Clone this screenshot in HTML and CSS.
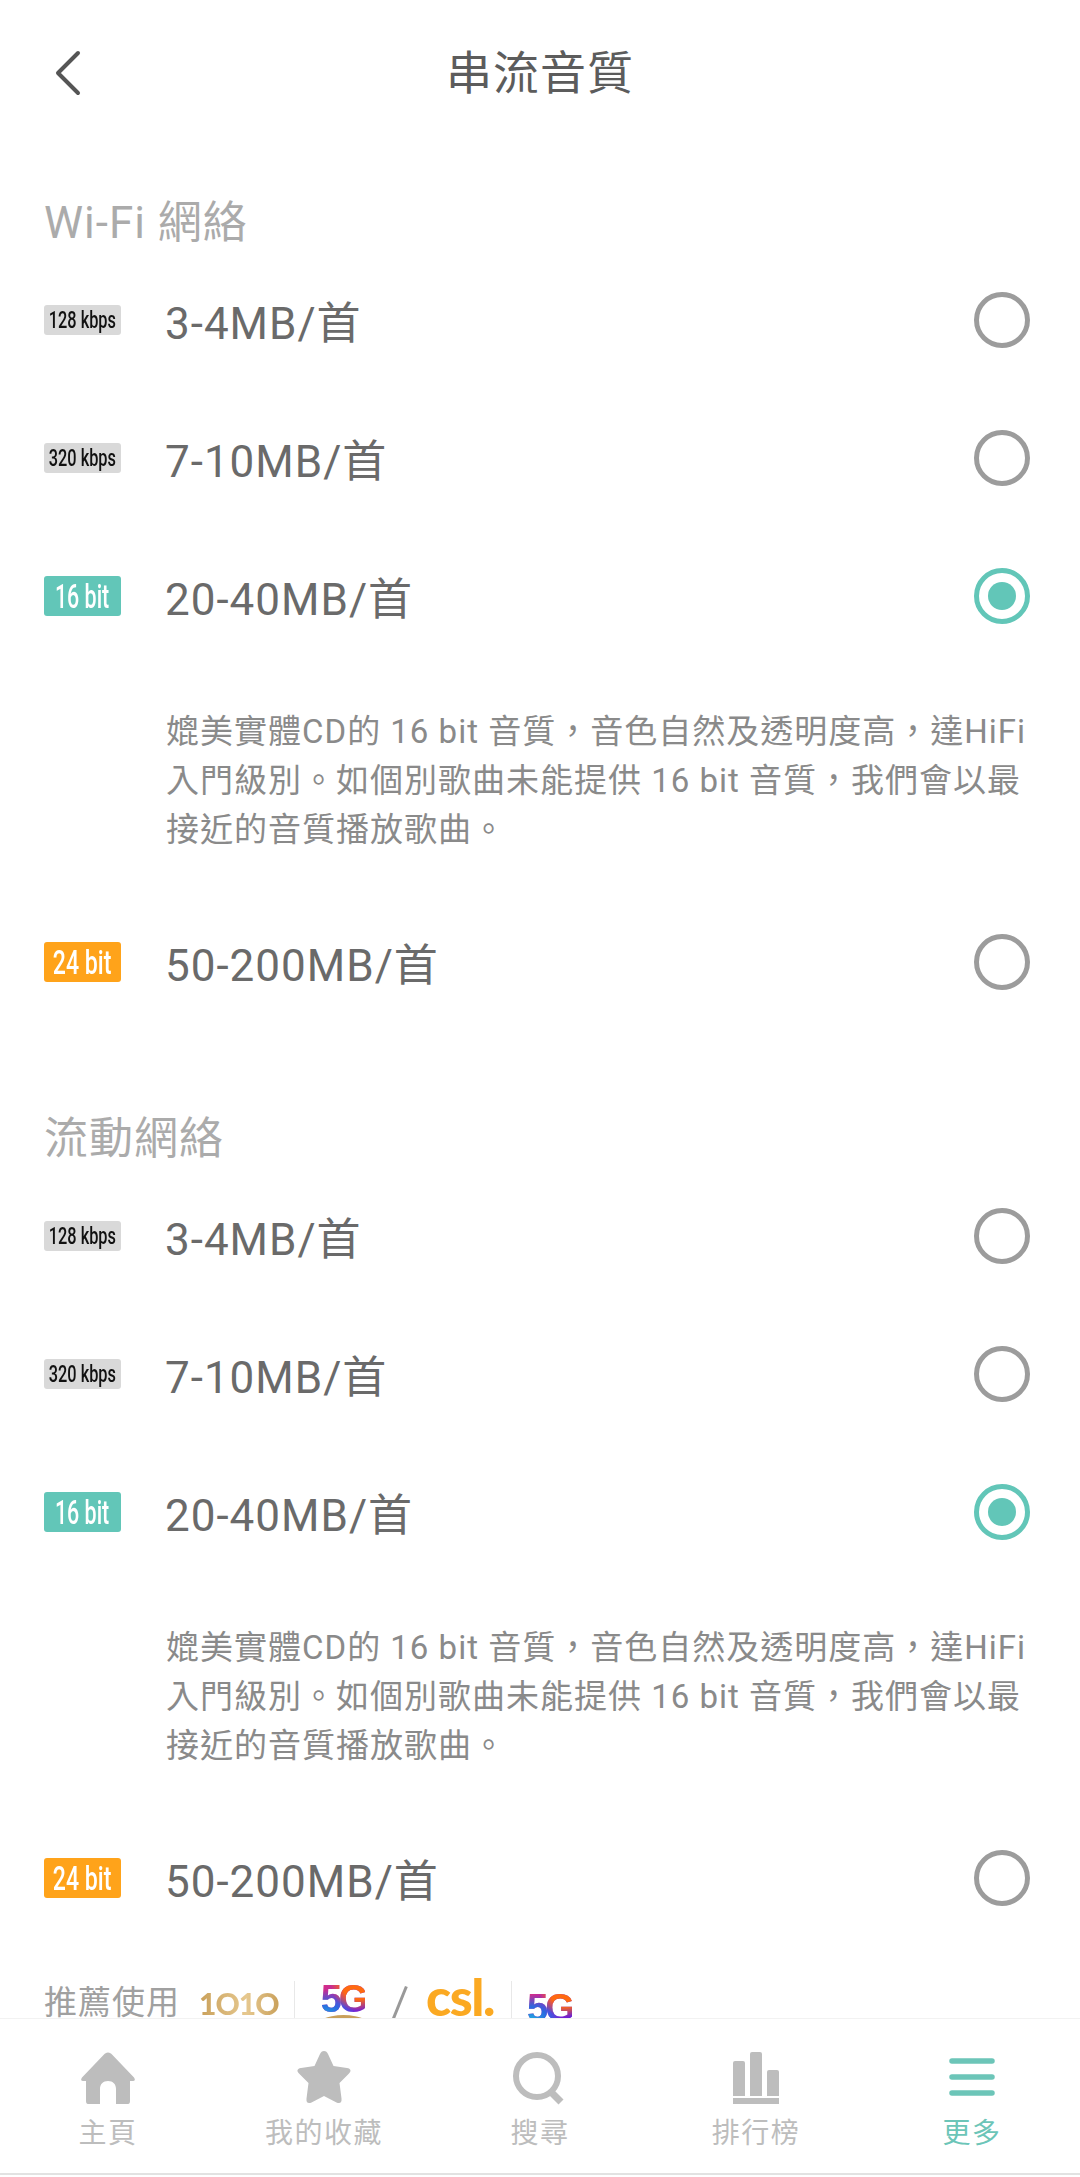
FILE: index.html
```html
<!DOCTYPE html>
<html lang="zh-Hant">
<head>
<meta charset="utf-8">
<title>串流音質</title>
<link rel="stylesheet" href="styles.css">
</head>
<body>
<div class="app">
  <header class="top">
    <svg class="back" width="30" height="46" viewBox="0 0 30 46"><path d="M25 3 L5 23 L25 43" fill="none" stroke="#555" stroke-width="4" stroke-linecap="round" stroke-linejoin="round"/></svg>
    <h1 class="title">串流音質</h1>
  </header>
  <main class="main">
    <section class="section">
      <h2 class="section-title">Wi-Fi 網絡</h2>
      <div class="row"><span class="badge small"><span class="badge-text">128 kbps</span></span><span class="label">3-4MB/首</span><span class="radio"></span></div>
      <div class="row"><span class="badge small"><span class="badge-text">320 kbps</span></span><span class="label">7-10MB/首</span><span class="radio"></span></div>
      <div class="row"><span class="badge teal"><span class="badge-text">16 bit</span></span><span class="label">20-40MB/首</span><span class="radio on"></span></div>
      <p class="desc">媲美實體CD的 16 bit 音質，音色自然及透明度高，達HiFi<br>入門級別。如個別歌曲未能提供 16 bit 音質，我們會以最<br>接近的音質播放歌曲。</p>
      <div class="row"><span class="badge orange"><span class="badge-text wide">24 bit</span></span><span class="label">50-200MB/首</span><span class="radio"></span></div>
    </section>
    <section class="section">
      <h2 class="section-title">流動網絡</h2>
      <div class="row"><span class="badge small"><span class="badge-text">128 kbps</span></span><span class="label">3-4MB/首</span><span class="radio"></span></div>
      <div class="row"><span class="badge small"><span class="badge-text">320 kbps</span></span><span class="label">7-10MB/首</span><span class="radio"></span></div>
      <div class="row"><span class="badge teal"><span class="badge-text">16 bit</span></span><span class="label">20-40MB/首</span><span class="radio on"></span></div>
      <p class="desc">媲美實體CD的 16 bit 音質，音色自然及透明度高，達HiFi<br>入門級別。如個別歌曲未能提供 16 bit 音質，我們會以最<br>接近的音質播放歌曲。</p>
      <div class="row"><span class="badge orange"><span class="badge-text wide">24 bit</span></span><span class="label">50-200MB/首</span><span class="radio"></span></div>
    </section>
    <div class="promo">
      <span class="promo-text">推薦使用</span>
      <span class="logo-1010">1O1O</span>
      <span class="promo-sep"></span>
      <span class="five-wrap"><span class="five">5G</span><span class="arc"></span></span>
      <span class="slash"></span>
      <span class="csl">csl.</span>
      <span class="promo-sep"></span>
      <span class="five five-b">5G</span>
    </div>
  </main>
  <nav class="nav">
    <div class="tab">
      <svg width="56" height="54" viewBox="0 0 56 54"><path d="M28 1.5 C30 1.5 31 2.5 32 3.5 L54 26.5 C55.500 28.500 55 30 53 30 L50 30 L50 50 C50 52.500 49 53 47 53 L36 53 L36 38 C36 33 33 30 28 30 C23 30 20 33 20 38 L20 53 L9 53 C7 53 6 52.500 6 50 L6 30 L3 30 C1 30 .5 28.500 2 26.500 L24 3.500 C25 2.500 26 1.500 28 1.500Z" fill="#bdbdbd"/></svg>
      <span class="tab-label">主頁</span>
    </div>
    <div class="tab">
      <svg width="56" height="54" viewBox="0 0 56 54"><path d="M28 0 C30 0 31 1 32 3 L37.500 15 L51 17 C55 17.800 55.500 20 53 22.500 L43.500 32 L45.500 47.500 C46 51.500 44 53 40.500 51.500 L28 45 L15.500 51.500 C12 53 10 51.500 10.500 47.500 L12.500 32 L3 22.500 C.5 20 1 17.800 5 17 L18.500 15 L24 3 C25 1 26 0 28 0Z" fill="#bdbdbd"/></svg>
      <span class="tab-label">我的收藏</span>
    </div>
    <div class="tab">
      <svg width="56" height="54" viewBox="0 0 56 54"><circle cx="25" cy="25" r="21" fill="none" stroke="#bdbdbd" stroke-width="6"/><path d="M39 41 L49 51" fill="none" stroke="#bdbdbd" stroke-width="7"/></svg>
      <span class="tab-label">搜尋</span>
    </div>
    <div class="tab">
      <svg width="56" height="54" viewBox="0 0 56 54"><path d="M6 12 a2 2 0 0 1 2-2 h8 a2 2 0 0 1 2 2 v33 h-12Z M23 3 a2 2 0 0 1 2-2 h8 a2 2 0 0 1 2 2 v42 h-12Z M40 21 a2 2 0 0 1 2-2 h8 a2 2 0 0 1 2 2 v24 h-12Z M6 47 h46 v6 h-46Z" fill="#bdbdbd" transform="translate(-1 0)"/></svg>
      <span class="tab-label">排行榜</span>
    </div>
    <div class="tab active">
      <svg width="56" height="54" viewBox="0 0 56 54"><path d="M8 10 H48 M8 26 H48 M8 42 H48" fill="none" stroke="#6cc5b8" stroke-width="5.500" stroke-linecap="round"/></svg>
      <span class="tab-label">更多</span>
    </div>
  </nav>
  <div class="foot"></div>
</div>
</body>
</html>
```
FILE: styles.css
```css
* { box-sizing: border-box; }
html, body { margin: 0; padding: 0; background: #fff; }
body { font-family: Roboto, "Noto Sans CJK TC", sans-serif; }
.app { width: 1080px; height: 2177px; display: flex; flex-direction: column; overflow: hidden; }
.top { height: 146px; flex: none; display: flex; align-items: flex-start; justify-content: center; position: relative; padding-top: 39px; }
.back { position: absolute; left: 53px; top: 50px; }
.title { margin: 0; font-size: 46px; line-height: 68px; font-weight: 400; color: #5c5c5c; letter-spacing: 1px; }
.main { flex: 1; min-height: 0; overflow: hidden; }
.section { padding: 50px 50px 31px 44px; }
.section-title { margin: 0; height: 55px; line-height: 55px; font-size: 44px; font-weight: 400; color: #ababab; letter-spacing: 1px; }
.row { height: 138px; display: flex; align-items: center; }
.badge { width: 77px; height: 40px; border-radius: 3px; display: flex; align-items: center; justify-content: center; color: #fff; flex: none; }
.badge-text { display: inline-block; font-size: 34px; font-weight: 500; transform: scaleX(.63); white-space: nowrap; }
.badge-text.wide { transform: scaleX(.68); }
.small { height: 30px; background: #d9d9d9; color: #111; }
.small .badge-text { font-size: 24px; transform: scaleX(.68); }
.teal { background: #62c6b8; }
.orange { background: #ffa31a; }
.label { margin-left: 44px; font-size: 44px; color: #6a6a6a; flex: 1; letter-spacing: 1px; }
.radio { width: 56px; height: 56px; border: 5.5px solid #9c9c9c; border-radius: 50%; flex: none; display: flex; align-items: center; justify-content: center; }
.radio.on { border-color: #62c6b8; }
.radio.on::after { content: ""; width: 28px; height: 28px; border-radius: 50%; background: #62c6b8; }
.desc { margin: 0; padding: 42px 0 39px 122px; font-size: 33px; line-height: 49px; color: #8a8a8a; white-space: nowrap; letter-spacing: 1px; }
.promo { display: flex; align-items: center; height: 50px; padding-left: 44px; }
.promo-text { font-size: 33px; line-height: 50px; color: #a0a0a0; letter-spacing: 1px; width: 155px; flex: none; }
.logo-1010 { font-family: Lato, sans-serif; font-size: 30px; font-weight: 900; letter-spacing: -1px; width: 95px; background: linear-gradient(90deg, #c9a05a, #e6c88f 50%, #c9a05a 85%); -webkit-background-clip: text; background-clip: text; color: transparent; flex: none; }
.promo-sep { width: 1px; height: 44px; background: #e8e8e8; flex: none; }
.five-wrap { position: relative; width: 96px; height: 50px; flex: none; display: flex; justify-content: center; }
.five { font-family: "Liberation Sans", sans-serif; font-weight: 700; font-size: 38px; line-height: 42px; letter-spacing: -3px; background: radial-gradient(circle at 85% 10%, #ff6a10 0, #ff6a10 28%, transparent 48%), radial-gradient(circle at 10% 90%, #20c0e0 0, #2a6ae0 32%, transparent 55%), linear-gradient(135deg, #e0307a 5%, #8a20d8 55%, #5a20d0 100%); -webkit-background-clip: text; background-clip: text; color: transparent; }
.five-b { margin-left: 15px; margin-top: 10px; flex: none; }
.arc { position: absolute; left: 18px; top: 37px; width: 61px; height: 30px; border: 4px solid #c9a05a; border-radius: 50%; }
.slash { width: 3px; height: 42px; background: #999; transform: rotate(22deg); margin: 6px 26px 0 6px; flex: none; }
.csl { font-family: Lato, sans-serif; font-weight: 900; font-size: 52px; letter-spacing: -1.500px; color: #fba922; width: 85px; flex: none; line-height: 50px; align-self: flex-start; margin-top: -7px; white-space: nowrap; }
.nav { flex: none; height: 155px; border-top: 1px solid #f2f2f2; display: grid; grid-template-columns: repeat(5, 1fr); background: #fff; }
.tab { display: flex; flex-direction: column; align-items: center; padding-top: 32px; color: #bdbdbd; }
.tab-label { margin-top: 10px; font-size: 28px; line-height: 38px; letter-spacing: 1.500px; }
.active { color: #6cc5b8; }
.foot { flex: none; height: 4px; border-top: 2px solid #e2e2e2; }
```
